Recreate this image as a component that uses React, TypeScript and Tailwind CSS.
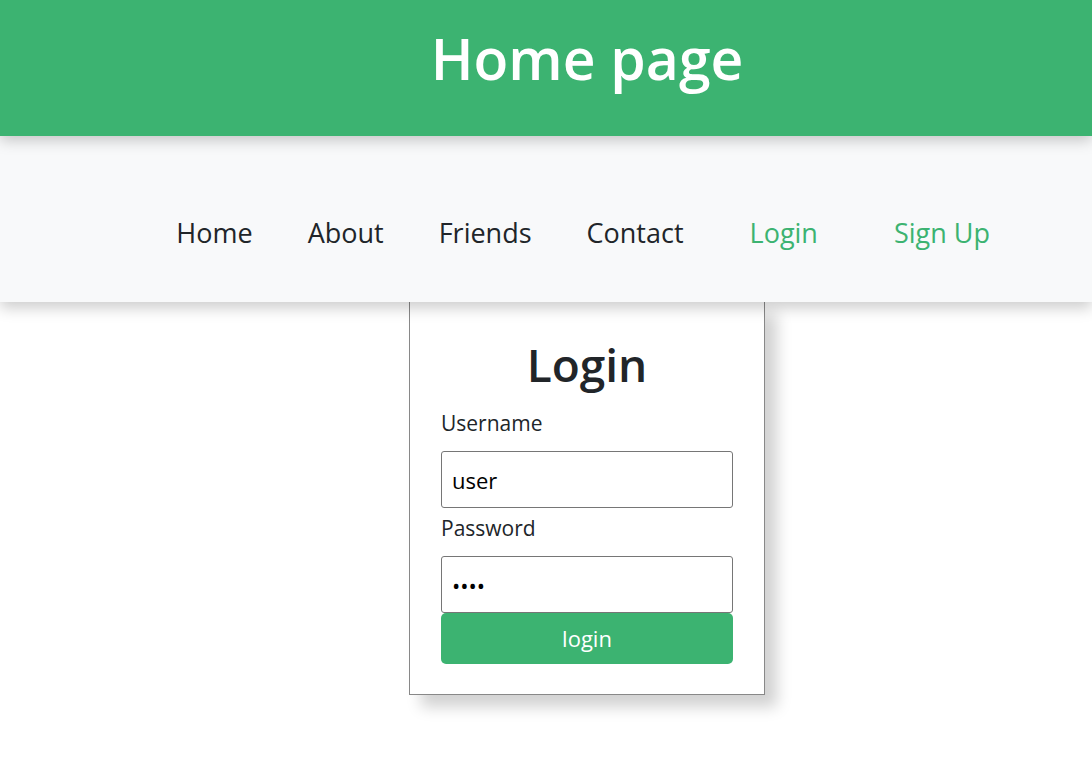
export default function App() {
  const links = [
    { label: 'Home', active: false, extra: '' },
    { label: 'About', active: false, extra: '' },
    { label: 'Friends', active: false, extra: '' },
    { label: 'Contact', active: false, extra: '' },
    { label: 'Login', active: true, extra: 'ml-[11px]' },
    { label: 'Sign Up', active: true, extra: 'ml-[21px]' },
  ];

  return (
    <div className="min-h-screen bg-white font-['Open_Sans',sans-serif] text-[#212529]">
      {/* Header */}
      <header className="relative z-20 flex h-[136px] items-center justify-center bg-[#3cb371] pb-[20px] pl-[82px] shadow-[0_4px_14px_rgba(0,0,0,0.22)]">
        <h1 className="text-[57px] font-semibold leading-none text-white">Home page</h1>
      </header>

      {/* Nav */}
      <nav className="relative z-10 flex h-[166px] items-start justify-end bg-[#f8f9fa] pr-[102px] pt-[79px] shadow-[0_6px_14px_rgba(0,0,0,0.2)]">
        <ul className="flex gap-[55px] text-[27px] leading-[36px]">
          {links.map((l) => (
            <li key={l.label} className={l.extra}>
              <a href="#" className={l.active ? 'text-[#3cb371]' : 'text-[#212529]'}>
                {l.label}
              </a>
            </li>
          ))}
        </ul>
      </nav>

      {/* Login card */}
      <div className="flex justify-center pl-[82px]">
        <form className="flex h-[393px] w-[356px] flex-col border border-t-0 border-[#888] bg-white px-[31px] pt-[34px] shadow-[12px_12px_14px_rgba(0,0,0,0.18)]">
          <h2 className="text-center text-[46px] font-semibold leading-[56px]">Login</h2>
          <label className="mt-[15px] text-[21px] leading-[32px]">Username</label>
          <input
            defaultValue="user"
            className="mt-[12px] h-[57px] w-full rounded-[3px] border border-[#767676] px-[10px] text-[22px] text-black outline-none"
          />
          <label className="mt-[4px] text-[21px] leading-[32px]">Password</label>
          <input
            type="password"
            defaultValue="user"
            className="mt-[12px] h-[57px] w-full rounded-[3px] border border-[#767676] px-[10px] text-[22px] text-black outline-none"
          />
          <button
            type="button"
            className="h-[51px] w-full rounded-[5px] bg-[#3cb371] text-[22px] text-white"
          >
            login
          </button>
        </form>
      </div>
    </div>
  );
}
